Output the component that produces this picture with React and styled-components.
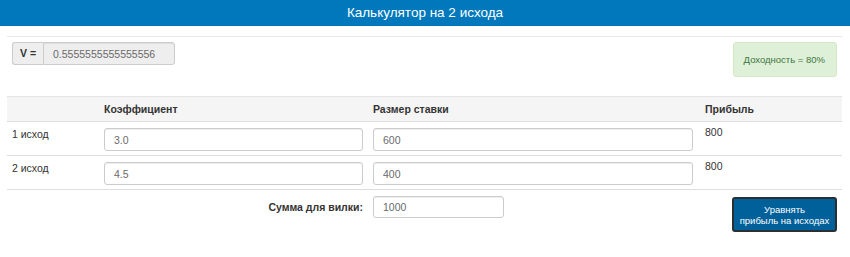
import React, { useState } from "react";
import styled, { createGlobalStyle } from "styled-components";

const GlobalStyle = createGlobalStyle`
  body {
    margin: 0;
    font-family: "Liberation Sans", Arial, sans-serif;
    font-size: 10.5px;
    line-height: 15px;
    color: #333;
    background: #fff;
  }
  * { box-sizing: border-box; }
`;

const Header = styled.header`
  height: 26px;
  background: #0078bb;
  color: #fff;
  font-size: 13.5px;
  display: flex;
  align-items: center;
  justify-content: center;
  padding-bottom: 2px;
`;

const Container = styled.div`
  padding: 0 8px 0 7px;
`;

const Divider = styled.div`
  margin-top: 10px;
  border-top: 1px solid #e8e8e8;
`;

const TopRow = styled.div`
  display: flex;
  justify-content: space-between;
  align-items: flex-start;
  padding: 5px 5px 0 5px;
`;

const InputGroup = styled.div`
  display: flex;
  width: 163px;
  height: 23px;
`;

const Addon = styled.span`
  width: 31px;
  display: flex;
  align-items: center;
  justify-content: center;
  font-weight: bold;
  background: #eee;
  border: 1px solid #ccc;
  border-right: none;
  border-radius: 3px 0 0 3px;
`;

const Field = styled.input`
  font-family: inherit;
  font-size: 10.5px;
  color: #6a6a6a;
  height: ${(p) => p.$h || 23}px;
  width: ${(p) => (p.$w ? `${p.$w}px` : "100%")};
  padding: 0 9px;
  border: 1px solid #ccc;
  border-radius: ${(p) => (p.$grouped ? "0 3px 3px 0" : "3px")};
  background: ${(p) => (p.readOnly ? "#eee" : "#fff")};
  box-shadow: inset 0 1px 1px rgba(0, 0, 0, 0.075);
  outline: none;
  flex: ${(p) => (p.$grouped ? 1 : "none")};
  min-width: 0;
`;

const Alert = styled.div`
  background: #dff0d8;
  border: 1px solid #d6e9c6;
  color: #3c763d;
  border-radius: 3px;
  font-size: 9.5px;
  padding: 10px 11px 9px 10px;
  line-height: 14px;
`;

const Table = styled.div`
  margin-top: 19px;
`;

const Row = styled.div`
  display: grid;
  grid-template-columns: 92px 269px 332px 142px;
  border-top: 1px solid ${(p) => (p.$head ? "#e4e4e4" : "#ddd")};
  background: ${(p) => (p.$head ? "#f5f5f5" : "transparent")};
  font-weight: ${(p) => (p.$head ? "bold" : "normal")};
  height: ${(p) => (p.$head ? 25 : 34)}px;
  align-items: ${(p) => (p.$head ? "center" : "start")};
`;

const Cell = styled.div`
  padding: ${(p) => (p.$head ? "0 5px" : "6px 5px 0 5px")};
  padding-right: ${(p) => p.$pr || 5}px;
  padding-top: ${(p) => (p.$head ? 0 : p.$pt ?? 6)}px;
`;

const Footer = styled.div`
  display: grid;
  grid-template-columns: 361px 332px 142px;
  border-top: 1px solid #ddd;
  padding-top: 6px;
  align-items: start;
`;

const SumLabel = styled.div`
  font-weight: bold;
  text-align: right;
  padding: 4px 5px 0 0;
`;

const ButtonCell = styled.div`
  display: flex;
  justify-content: flex-end;
  padding-right: 5px;
`;

const Button = styled.button`
  width: 105px;
  height: 35px;
  margin-top: 1px;
  background: #00609a;
  color: #fff;
  border: 2px solid #2a2f33;
  border-radius: 3px;
  font-family: inherit;
  font-size: 9.5px;
  line-height: 11px;
  padding: 0 4px;
  cursor: pointer;
`;

const outcomes = [
  { label: "1 исход", k: "3.0", bet: "600", profit: "800" },
  { label: "2 исход", k: "4.5", bet: "400", profit: "800" },
];

export default function App() {
  const [rows] = useState(outcomes);

  return (
    <>
      <GlobalStyle />
      <Header>Калькулятор на 2 исхода</Header>
      <Container>
        <Divider />
        <TopRow>
          <InputGroup>
            <Addon>V =</Addon>
            <Field $grouped readOnly defaultValue="0.5555555555555556" />
          </InputGroup>
          <Alert>Доходность = 80%</Alert>
        </TopRow>

        <Table>
          <Row $head>
            <Cell $head></Cell>
            <Cell $head>Коэффициент</Cell>
            <Cell $head>Размер ставки</Cell>
            <Cell $head>Прибыль</Cell>
          </Row>
          {rows.map((r) => (
            <Row key={r.label}>
              <Cell $pt={5}>{r.label}</Cell>
              <Cell>
                <Field defaultValue={r.k} />
              </Cell>
              <Cell $pr={7}>
                <Field defaultValue={r.bet} />
              </Cell>
              <Cell $pt={3}>{r.profit}</Cell>
            </Row>
          ))}
          <Footer>
            <SumLabel>Сумма для вилки:</SumLabel>
            <Cell $pt={0}>
              <Field $w={131} $h={22} defaultValue="1000" />
            </Cell>
            <ButtonCell>
              <Button>
                Уравнять
                <br />
                прибыль на исходах
              </Button>
            </ButtonCell>
          </Footer>
        </Table>
      </Container>
    </>
  );
}
